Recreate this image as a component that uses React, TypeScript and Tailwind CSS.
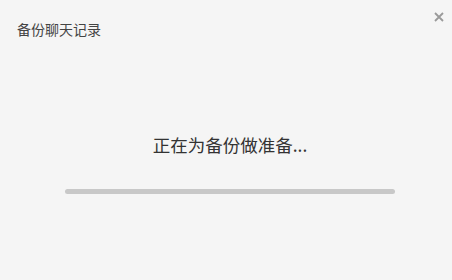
import React from "react";

export default function App() {
  return (
    <div
      className="w-[452px] h-[280px] bg-[#f5f5f5] flex flex-col"
      style={{ fontFamily: '"Noto Sans CJK SC", "Noto Sans", sans-serif' }}
    >
      <div className="flex items-start justify-between h-[60px]">
        <div className="pl-[17px] pt-[20px] text-[14px] leading-[18px] text-[#444]">备份聊天记录</div>
        <div className="pt-[12px] pr-[8px]">
          <svg width="10" height="10" viewBox="0 0 10 10">
            <path d="M1 1L9 9M9 1L1 9" stroke="#9a9a9a" strokeWidth="1.8" />
          </svg>
        </div>
      </div>
      <div className="flex flex-col items-center pt-[73px] pl-[8px]">
        <div className="text-[17.5px] leading-[24px] text-[#333]">正在为备份做准备...</div>
        <div className="mt-[32px] w-[330px] h-[5px] rounded-full bg-[#c8c8c8]" />
      </div>
    </div>
  );
}
